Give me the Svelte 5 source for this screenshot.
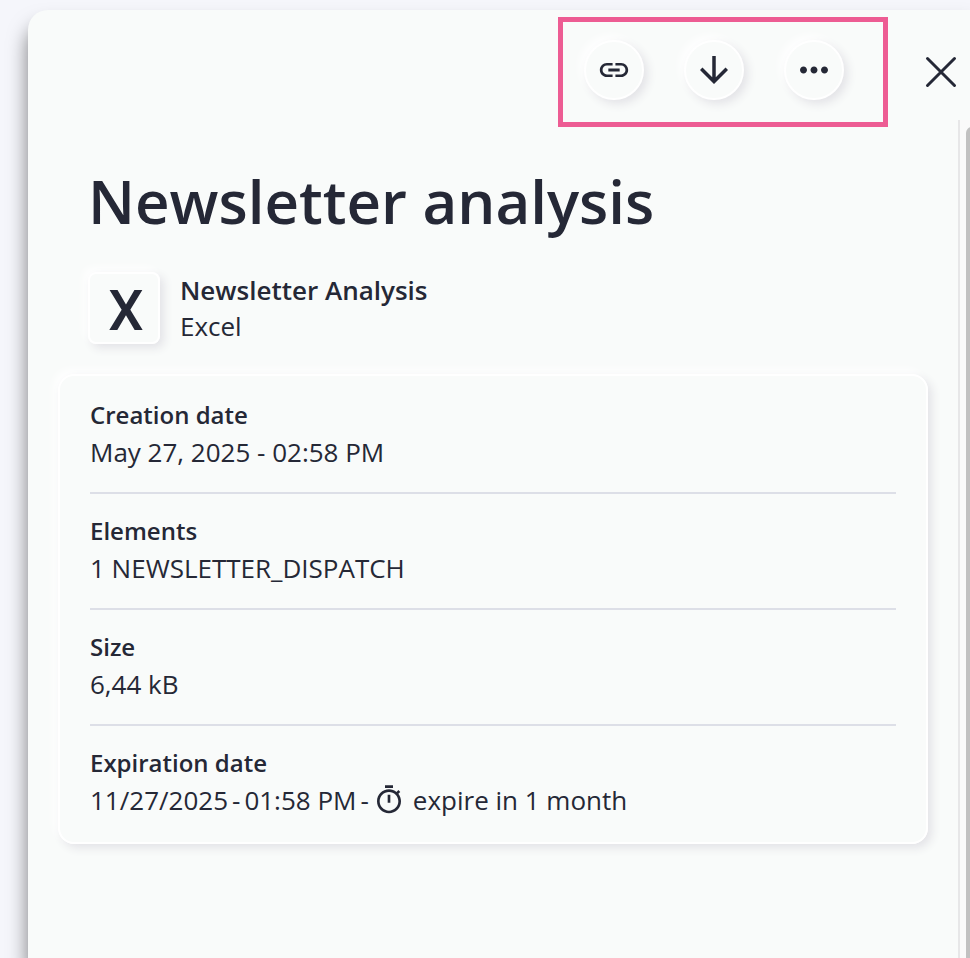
<script>
  let title = "Newsletter analysis";
  let file = { name: "Newsletter Analysis", type: "Excel" };

  let details = [
    { label: "Creation date", value: "May 27, 2025 - 02:58 PM" },
    { label: "Elements", value: "1 NEWSLETTER_DISPATCH" },
    { label: "Size", value: "6,44 kB" },
  ];

  let expiration = {
    date: "11/27/2025",
    time: "01:58 PM",
    remaining: "expire in 1 month",
  };

  const actions = [
    {
      name: "Copy link",
      size: 34,
      path: "M3.9 12c0-1.71 1.39-3.1 3.1-3.1h4V7H7c-2.76 0-5 2.24-5 5s2.24 5 5 5h4v-1.9H7c-1.71 0-3.1-1.39-3.1-3.1zM8 13h8v-2H8v2zm9-6h-4v1.9h4c1.71 0 3.1 1.39 3.1 3.1s-1.39 3.1-3.1 3.1h-4V17h4c2.76 0 5-2.24 5-5s-2.24-5-5-5z",
    },
    {
      name: "Download",
      size: 42,
      path: "M20 12l-1.41-1.41L13 16.17V4h-2v12.17l-5.58-5.59L4 12l8 8 8-8z",
    },
    {
      name: "More options",
      size: 42,
      path: "M6 10c-1.1 0-2 .9-2 2s.9 2 2 2 2-.9 2-2-.9-2-2-2zm12 0c-1.1 0-2 .9-2 2s.9 2 2 2 2-.9 2-2-.9-2-2-2zm-6 0c-1.1 0-2 .9-2 2s.9 2 2 2 2-.9 2-2-.9-2-2-2z",
    },
  ];
</script>

<div class="page">
  <main class="panel">
    <header class="head">
      <div class="actions">
        {#each actions as action}
          <button class="round" type="button" aria-label={action.name}>
            <svg width={action.size} height={action.size} viewBox="0 0 24 24">
              <path d={action.path} />
            </svg>
          </button>
        {/each}
      </div>
      <button class="close" type="button" aria-label="Close">
        <svg width="32" height="32" viewBox="0 0 32 32">
          <path d="M2.5 2.5l27 27M29.5 2.5l-27 27" />
        </svg>
      </button>
    </header>

    <div class="body">
      <section class="content">
        <h1>{title}</h1>

        <div class="file">
          <div class="file-icon" aria-hidden="true">X</div>
          <div class="file-text">
            <strong>{file.name}</strong>
            <span>{file.type}</span>
          </div>
        </div>

        <dl class="card">
          {#each details as detail}
            <div class="row">
              <dt>{detail.label}</dt>
              <dd>{detail.value}</dd>
            </div>
          {/each}
          <div class="row">
            <dt>Expiration date</dt>
            <dd class="expiration">
              <span>{expiration.date}</span>
              <span>-</span>
              <span>{expiration.time}</span>
              <span>-</span>
              <svg width="32" height="32" viewBox="0 0 24 24" aria-hidden="true">
                <path
                  d="M15 1H9v2h6V1zm-4 13h2V8h-2v6zm8.03-6.61l1.42-1.42c-.43-.51-.9-.99-1.41-1.41l-1.42 1.42C16.07 4.74 14.12 4 12 4c-4.97 0-9 4.03-9 9s4.02 9 9 9 9-4.03 9-9c0-2.12-.74-4.07-1.97-5.61zM12 20c-3.87 0-7-3.13-7-7s3.13-7 7-7 7 3.13 7 7-3.13 7-7 7z"
                />
              </svg>
              <span class="remaining">{expiration.remaining}</span>
            </dd>
          </div>
        </dl>
      </section>
      <div class="scrollbar"><div class="thumb"></div></div>
    </div>
  </main>
</div>

<style>
  :global(body) {
    margin: 0;
  }

  .page {
    box-sizing: border-box;
    display: flex;
    height: 100vh;
    padding: 10px 0 0 28px;
    overflow: hidden;
    background-color: #f5f6fb;
    color: #252836;
    font-family: "Open Sans", "Noto Sans", sans-serif;
    font-size: 26px;
    line-height: 36px;
  }

  .panel {
    flex: 1;
    min-width: 0;
    display: flex;
    flex-direction: column;
    background-color: #f9fbfa;
    border-radius: 20px 0 0 0;
    box-shadow: 0 16px 20px rgba(0, 0, 0, 0.5);
  }

  .head {
    display: flex;
    justify-content: flex-end;
    align-items: center;
    gap: 33px;
    padding: 7px 9px 0 0;
  }

  .actions {
    display: flex;
    gap: 40px;
    padding: 18px 39px 22px 21px;
    border: 5px solid #ed5c93;
  }

  button {
    display: flex;
    align-items: center;
    justify-content: center;
    padding: 0;
    border: none;
    background: none;
    color: inherit;
    cursor: pointer;
  }

  svg {
    flex: none;
    fill: currentColor;
  }

  .round {
    width: 60px;
    height: 60px;
    border: 2px solid #fff;
    border-radius: 50%;
    background-color: #f9fbfa;
    box-shadow:
      4px 4px 10px #e3e3e7,
      -4px -4px 10px #fff;
  }

  .close {
    width: 40px;
    height: 40px;
  }

  .close path {
    stroke: currentColor;
    stroke-width: 3;
    stroke-linecap: round;
  }

  /* the divider starts slightly above the end of the toolbar */
  .body {
    flex: 1;
    min-height: 0;
    display: flex;
    margin-top: -7px;
  }

  .content {
    flex: 1;
    min-width: 0;
    padding: 41px 30px 0;
  }

  h1 {
    margin: 0 30px;
    font-size: 60px;
    font-weight: 600;
    line-height: 80px;
  }

  .file {
    display: flex;
    gap: 20px;
    margin: 31px 30px 30px;
  }

  .file-icon {
    box-sizing: border-box;
    display: flex;
    align-items: center;
    justify-content: center;
    width: 72px;
    height: 72px;
    padding: 6px 0 0 4px;
    border: 2px solid #fff;
    border-radius: 8px;
    box-shadow:
      4px 4px 10px #e3e3e7,
      -4px -4px 10px #fff;
    font-family: Roboto, sans-serif;
    font-size: 56px;
    font-weight: 500;
  }

  .file-text {
    display: flex;
    flex-direction: column;
  }

  strong,
  dt {
    font-weight: 600;
  }

  .card {
    margin: 0;
    padding: 2px 30px;
    border: 2px solid #fff;
    border-radius: 16px;
    box-shadow:
      4px 4px 10px #e3e3e7,
      -4px -4px 10px #fff;
  }

  .row {
    padding: 19px 0 22px;
    border-bottom: 2px solid #dddfe7;
  }

  .row:last-child {
    border-bottom: none;
  }

  dt {
    font-size: 24px;
  }

  dd {
    margin: 1px 0 0;
  }

  .expiration {
    display: flex;
    align-items: center;
    gap: 4px;
  }

  .remaining {
    margin-left: 4px;
  }

  .scrollbar {
    flex: none;
    width: 10px;
    overflow: hidden;
    border-left: 2px solid #e7e7e8;
    background-color: #fafafa;
  }

  .thumb {
    width: 12px;
    height: 100%;
    margin: 7px 0 0 6px;
    border-radius: 6px;
    background-color: #c1c1c1;
  }
</style>
